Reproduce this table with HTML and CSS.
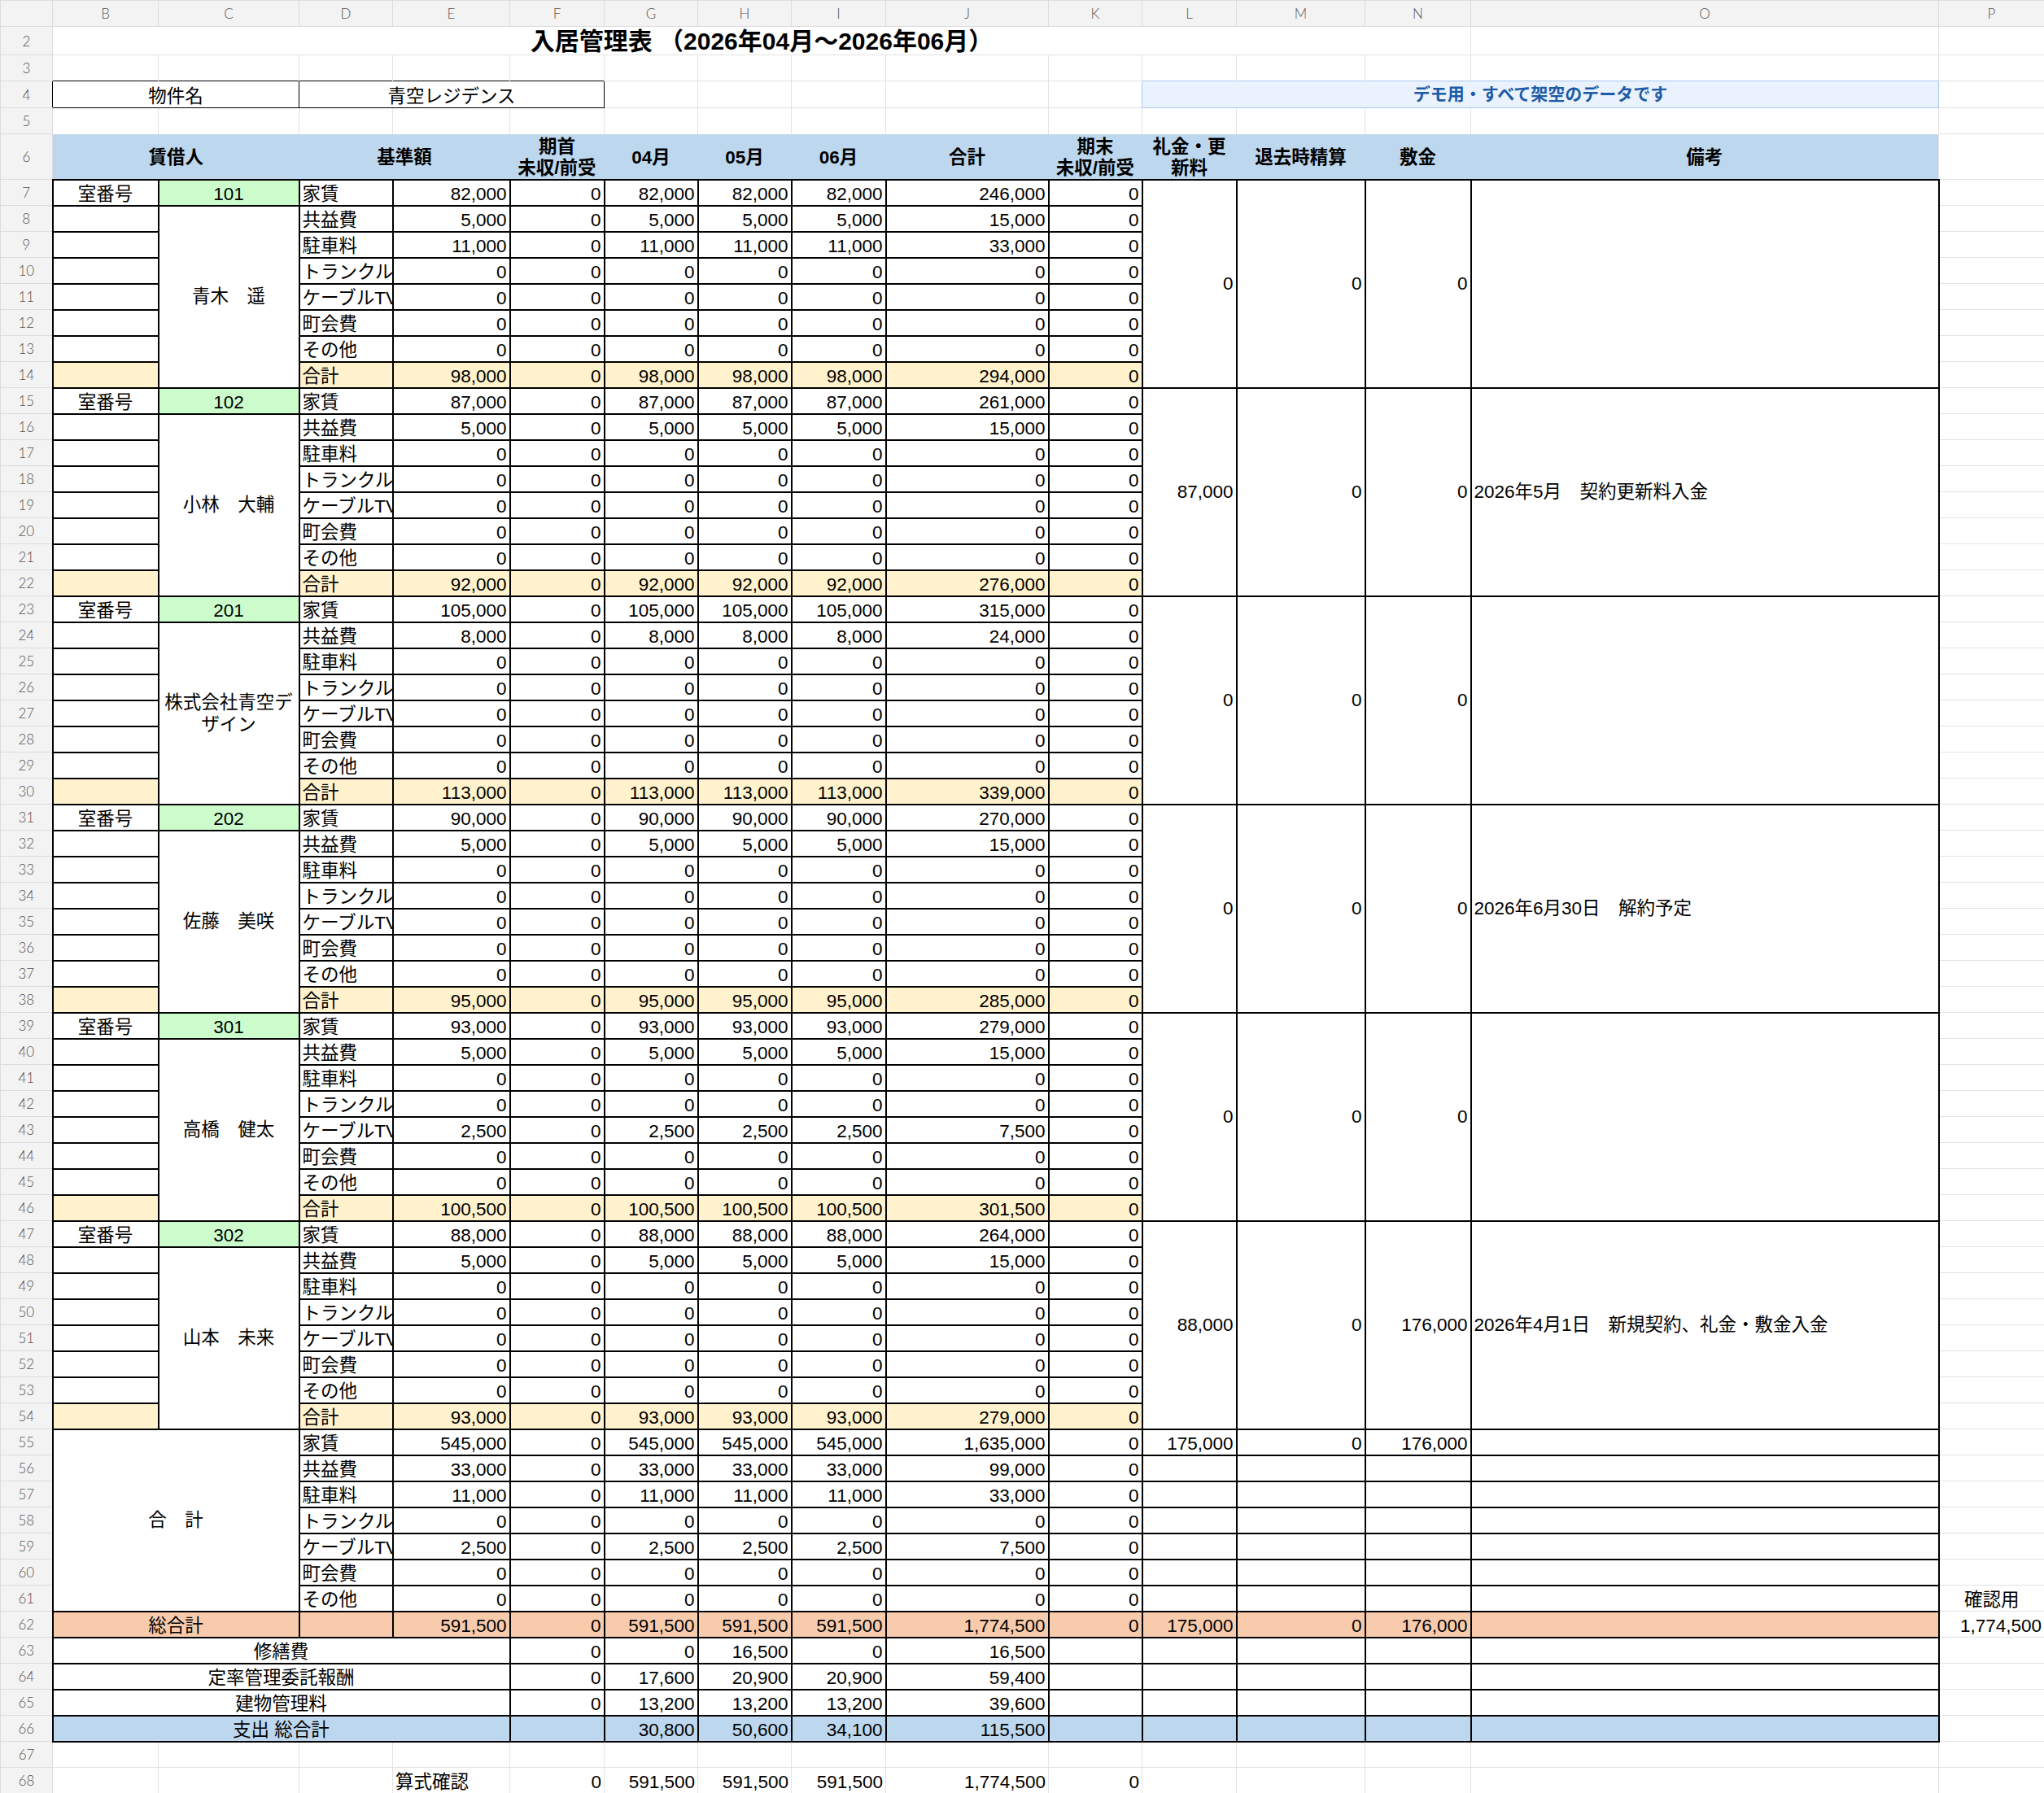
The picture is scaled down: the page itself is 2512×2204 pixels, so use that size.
FILE: index.html
```html
<!DOCTYPE html>
<html lang="ja">
<head>
<meta charset="utf-8">
<title>入居管理表</title>
<link rel="stylesheet" href="styles.css">
</head>
<body>
<table class="sheet">
<colgroup>
<col class="w64"><col class="w130"><col class="w173"><col class="w115"><col class="w144"><col class="w116"><col class="w115"><col class="w115"><col class="w116"><col class="w200"><col class="w115"><col class="w116"><col class="w158"><col class="w130"><col class="w575"><col class="w130">
</colgroup>
<tr class="r1"><th class="corner"></th><th>B</th><th>C</th><th>D</th><th>E</th><th>F</th><th>G</th><th>H</th><th>I</th><th>J</th><th>K</th><th>L</th><th>M</th><th>N</th><th>O</th><th>P</th></tr>
<tr class="r2"><th class="rh">2</th><td class="e title" colspan="13">入居管理表 （2026年04月～2026年06月）</td><td class="e"></td><td class="e"></td></tr>
<tr><th class="rh">3</th><td class="e nb"></td><td class="e nb"></td><td class="e nb"></td><td class="e nb"></td><td class="e nb"></td><td class="e"></td><td class="e"></td><td class="e"></td><td class="e"></td><td class="e"></td><td class="e nb"></td><td class="e nb"></td><td class="e nb"></td><td class="e nb"></td><td class="e"></td></tr>
<tr class="r4"><th class="rh nr">4</th><td class="box" colspan="2">物件名</td><td class="box" colspan="3">青空レジデンス</td><td class="e"></td><td class="e"></td><td class="e"></td><td class="e"></td><td class="e nr"></td><td class="banner" colspan="4">デモ用・すべて架空のデータです</td><td class="e"></td></tr>
<tr><th class="rh">5</th><td class="e nb"></td><td class="e nb"></td><td class="e nb"></td><td class="e nb"></td><td class="e nb"></td><td class="e nb"></td><td class="e nb"></td><td class="e nb"></td><td class="e nb"></td><td class="e nb"></td><td class="e nb"></td><td class="e nb"></td><td class="e nb"></td><td class="e nb"></td><td class="e"></td></tr>
<tr class="r6"><th class="rh">6</th><td class="hd" colspan="2">賃借人</td><td class="hd" colspan="2">基準額</td><td class="hd">期首<br>未収/前受</td><td class="hd">04月</td><td class="hd">05月</td><td class="hd">06月</td><td class="hd">合計</td><td class="hd">期末<br>未収/前受</td><td class="hd">礼金・更新料</td><td class="hd">退去時精算</td><td class="hd">敷金</td><td class="hd">備考</td><td class="e"></td></tr>

<tr><th class="rh">7</th><td class="c">室番号</td><td class="c g">101</td><td class="l">家賃</td><td>82,000</td><td>0</td><td>82,000</td><td>82,000</td><td>82,000</td><td>246,000</td><td>0</td><td class="m" rowspan="8">0</td><td class="m" rowspan="8">0</td><td class="m" rowspan="8">0</td><td class="m l" rowspan="8"></td><td class="e"></td></tr>
<tr><th class="rh">8</th><td></td><td class="nm" rowspan="7">青木　遥</td><td class="l">共益費</td><td>5,000</td><td>0</td><td>5,000</td><td>5,000</td><td>5,000</td><td>15,000</td><td>0</td><td class="e"></td></tr>
<tr><th class="rh">9</th><td></td><td class="l">駐車料</td><td>11,000</td><td>0</td><td>11,000</td><td>11,000</td><td>11,000</td><td>33,000</td><td>0</td><td class="e"></td></tr>
<tr><th class="rh">10</th><td></td><td class="l">トランクルーム</td><td>0</td><td>0</td><td>0</td><td>0</td><td>0</td><td>0</td><td>0</td><td class="e"></td></tr>
<tr><th class="rh">11</th><td></td><td class="l">ケーブルTV</td><td>0</td><td>0</td><td>0</td><td>0</td><td>0</td><td>0</td><td>0</td><td class="e"></td></tr>
<tr><th class="rh">12</th><td></td><td class="l">町会費</td><td>0</td><td>0</td><td>0</td><td>0</td><td>0</td><td>0</td><td>0</td><td class="e"></td></tr>
<tr><th class="rh">13</th><td></td><td class="l">その他</td><td>0</td><td>0</td><td>0</td><td>0</td><td>0</td><td>0</td><td>0</td><td class="e"></td></tr>
<tr><th class="rh">14</th><td class="y"></td><td class="l y">合計</td><td class="y">98,000</td><td class="y">0</td><td class="y">98,000</td><td class="y">98,000</td><td class="y">98,000</td><td class="y">294,000</td><td class="y">0</td><td class="e"></td></tr>

<tr><th class="rh">15</th><td class="c">室番号</td><td class="c g">102</td><td class="l">家賃</td><td>87,000</td><td>0</td><td>87,000</td><td>87,000</td><td>87,000</td><td>261,000</td><td>0</td><td class="m" rowspan="8">87,000</td><td class="m" rowspan="8">0</td><td class="m" rowspan="8">0</td><td class="m l" rowspan="8">2026年5月　契約更新料入金</td><td class="e"></td></tr>
<tr><th class="rh">16</th><td></td><td class="nm" rowspan="7">小林　大輔</td><td class="l">共益費</td><td>5,000</td><td>0</td><td>5,000</td><td>5,000</td><td>5,000</td><td>15,000</td><td>0</td><td class="e"></td></tr>
<tr><th class="rh">17</th><td></td><td class="l">駐車料</td><td>0</td><td>0</td><td>0</td><td>0</td><td>0</td><td>0</td><td>0</td><td class="e"></td></tr>
<tr><th class="rh">18</th><td></td><td class="l">トランクルーム</td><td>0</td><td>0</td><td>0</td><td>0</td><td>0</td><td>0</td><td>0</td><td class="e"></td></tr>
<tr><th class="rh">19</th><td></td><td class="l">ケーブルTV</td><td>0</td><td>0</td><td>0</td><td>0</td><td>0</td><td>0</td><td>0</td><td class="e"></td></tr>
<tr><th class="rh">20</th><td></td><td class="l">町会費</td><td>0</td><td>0</td><td>0</td><td>0</td><td>0</td><td>0</td><td>0</td><td class="e"></td></tr>
<tr><th class="rh">21</th><td></td><td class="l">その他</td><td>0</td><td>0</td><td>0</td><td>0</td><td>0</td><td>0</td><td>0</td><td class="e"></td></tr>
<tr><th class="rh">22</th><td class="y"></td><td class="l y">合計</td><td class="y">92,000</td><td class="y">0</td><td class="y">92,000</td><td class="y">92,000</td><td class="y">92,000</td><td class="y">276,000</td><td class="y">0</td><td class="e"></td></tr>

<tr><th class="rh">23</th><td class="c">室番号</td><td class="c g">201</td><td class="l">家賃</td><td>105,000</td><td>0</td><td>105,000</td><td>105,000</td><td>105,000</td><td>315,000</td><td>0</td><td class="m" rowspan="8">0</td><td class="m" rowspan="8">0</td><td class="m" rowspan="8">0</td><td class="m l" rowspan="8"></td><td class="e"></td></tr>
<tr><th class="rh">24</th><td></td><td class="nm" rowspan="7">株式会社青空デザイン</td><td class="l">共益費</td><td>8,000</td><td>0</td><td>8,000</td><td>8,000</td><td>8,000</td><td>24,000</td><td>0</td><td class="e"></td></tr>
<tr><th class="rh">25</th><td></td><td class="l">駐車料</td><td>0</td><td>0</td><td>0</td><td>0</td><td>0</td><td>0</td><td>0</td><td class="e"></td></tr>
<tr><th class="rh">26</th><td></td><td class="l">トランクルーム</td><td>0</td><td>0</td><td>0</td><td>0</td><td>0</td><td>0</td><td>0</td><td class="e"></td></tr>
<tr><th class="rh">27</th><td></td><td class="l">ケーブルTV</td><td>0</td><td>0</td><td>0</td><td>0</td><td>0</td><td>0</td><td>0</td><td class="e"></td></tr>
<tr><th class="rh">28</th><td></td><td class="l">町会費</td><td>0</td><td>0</td><td>0</td><td>0</td><td>0</td><td>0</td><td>0</td><td class="e"></td></tr>
<tr><th class="rh">29</th><td></td><td class="l">その他</td><td>0</td><td>0</td><td>0</td><td>0</td><td>0</td><td>0</td><td>0</td><td class="e"></td></tr>
<tr><th class="rh">30</th><td class="y"></td><td class="l y">合計</td><td class="y">113,000</td><td class="y">0</td><td class="y">113,000</td><td class="y">113,000</td><td class="y">113,000</td><td class="y">339,000</td><td class="y">0</td><td class="e"></td></tr>

<tr><th class="rh">31</th><td class="c">室番号</td><td class="c g">202</td><td class="l">家賃</td><td>90,000</td><td>0</td><td>90,000</td><td>90,000</td><td>90,000</td><td>270,000</td><td>0</td><td class="m" rowspan="8">0</td><td class="m" rowspan="8">0</td><td class="m" rowspan="8">0</td><td class="m l" rowspan="8">2026年6月30日　解約予定</td><td class="e"></td></tr>
<tr><th class="rh">32</th><td></td><td class="nm" rowspan="7">佐藤　美咲</td><td class="l">共益費</td><td>5,000</td><td>0</td><td>5,000</td><td>5,000</td><td>5,000</td><td>15,000</td><td>0</td><td class="e"></td></tr>
<tr><th class="rh">33</th><td></td><td class="l">駐車料</td><td>0</td><td>0</td><td>0</td><td>0</td><td>0</td><td>0</td><td>0</td><td class="e"></td></tr>
<tr><th class="rh">34</th><td></td><td class="l">トランクルーム</td><td>0</td><td>0</td><td>0</td><td>0</td><td>0</td><td>0</td><td>0</td><td class="e"></td></tr>
<tr><th class="rh">35</th><td></td><td class="l">ケーブルTV</td><td>0</td><td>0</td><td>0</td><td>0</td><td>0</td><td>0</td><td>0</td><td class="e"></td></tr>
<tr><th class="rh">36</th><td></td><td class="l">町会費</td><td>0</td><td>0</td><td>0</td><td>0</td><td>0</td><td>0</td><td>0</td><td class="e"></td></tr>
<tr><th class="rh">37</th><td></td><td class="l">その他</td><td>0</td><td>0</td><td>0</td><td>0</td><td>0</td><td>0</td><td>0</td><td class="e"></td></tr>
<tr><th class="rh">38</th><td class="y"></td><td class="l y">合計</td><td class="y">95,000</td><td class="y">0</td><td class="y">95,000</td><td class="y">95,000</td><td class="y">95,000</td><td class="y">285,000</td><td class="y">0</td><td class="e"></td></tr>

<tr><th class="rh">39</th><td class="c">室番号</td><td class="c g">301</td><td class="l">家賃</td><td>93,000</td><td>0</td><td>93,000</td><td>93,000</td><td>93,000</td><td>279,000</td><td>0</td><td class="m" rowspan="8">0</td><td class="m" rowspan="8">0</td><td class="m" rowspan="8">0</td><td class="m l" rowspan="8"></td><td class="e"></td></tr>
<tr><th class="rh">40</th><td></td><td class="nm" rowspan="7">高橋　健太</td><td class="l">共益費</td><td>5,000</td><td>0</td><td>5,000</td><td>5,000</td><td>5,000</td><td>15,000</td><td>0</td><td class="e"></td></tr>
<tr><th class="rh">41</th><td></td><td class="l">駐車料</td><td>0</td><td>0</td><td>0</td><td>0</td><td>0</td><td>0</td><td>0</td><td class="e"></td></tr>
<tr><th class="rh">42</th><td></td><td class="l">トランクルーム</td><td>0</td><td>0</td><td>0</td><td>0</td><td>0</td><td>0</td><td>0</td><td class="e"></td></tr>
<tr><th class="rh">43</th><td></td><td class="l">ケーブルTV</td><td>2,500</td><td>0</td><td>2,500</td><td>2,500</td><td>2,500</td><td>7,500</td><td>0</td><td class="e"></td></tr>
<tr><th class="rh">44</th><td></td><td class="l">町会費</td><td>0</td><td>0</td><td>0</td><td>0</td><td>0</td><td>0</td><td>0</td><td class="e"></td></tr>
<tr><th class="rh">45</th><td></td><td class="l">その他</td><td>0</td><td>0</td><td>0</td><td>0</td><td>0</td><td>0</td><td>0</td><td class="e"></td></tr>
<tr><th class="rh">46</th><td class="y"></td><td class="l y">合計</td><td class="y">100,500</td><td class="y">0</td><td class="y">100,500</td><td class="y">100,500</td><td class="y">100,500</td><td class="y">301,500</td><td class="y">0</td><td class="e"></td></tr>

<tr><th class="rh">47</th><td class="c">室番号</td><td class="c g">302</td><td class="l">家賃</td><td>88,000</td><td>0</td><td>88,000</td><td>88,000</td><td>88,000</td><td>264,000</td><td>0</td><td class="m" rowspan="8">88,000</td><td class="m" rowspan="8">0</td><td class="m" rowspan="8">176,000</td><td class="m l" rowspan="8">2026年4月1日　新規契約、礼金・敷金入金</td><td class="e"></td></tr>
<tr><th class="rh">48</th><td></td><td class="nm" rowspan="7">山本　未来</td><td class="l">共益費</td><td>5,000</td><td>0</td><td>5,000</td><td>5,000</td><td>5,000</td><td>15,000</td><td>0</td><td class="e"></td></tr>
<tr><th class="rh">49</th><td></td><td class="l">駐車料</td><td>0</td><td>0</td><td>0</td><td>0</td><td>0</td><td>0</td><td>0</td><td class="e"></td></tr>
<tr><th class="rh">50</th><td></td><td class="l">トランクルーム</td><td>0</td><td>0</td><td>0</td><td>0</td><td>0</td><td>0</td><td>0</td><td class="e"></td></tr>
<tr><th class="rh">51</th><td></td><td class="l">ケーブルTV</td><td>0</td><td>0</td><td>0</td><td>0</td><td>0</td><td>0</td><td>0</td><td class="e"></td></tr>
<tr><th class="rh">52</th><td></td><td class="l">町会費</td><td>0</td><td>0</td><td>0</td><td>0</td><td>0</td><td>0</td><td>0</td><td class="e"></td></tr>
<tr><th class="rh">53</th><td></td><td class="l">その他</td><td>0</td><td>0</td><td>0</td><td>0</td><td>0</td><td>0</td><td>0</td><td class="e"></td></tr>
<tr><th class="rh">54</th><td class="y"></td><td class="l y">合計</td><td class="y">93,000</td><td class="y">0</td><td class="y">93,000</td><td class="y">93,000</td><td class="y">93,000</td><td class="y">279,000</td><td class="y">0</td><td class="e"></td></tr>

<tr><th class="rh">55</th><td class="nm" colspan="2" rowspan="7">合　計</td><td class="l">家賃</td><td>545,000</td><td>0</td><td>545,000</td><td>545,000</td><td>545,000</td><td>1,635,000</td><td>0</td><td>175,000</td><td>0</td><td>176,000</td><td></td><td class="e"></td></tr>
<tr><th class="rh">56</th><td class="l">共益費</td><td>33,000</td><td>0</td><td>33,000</td><td>33,000</td><td>33,000</td><td>99,000</td><td>0</td><td></td><td></td><td></td><td></td><td class="e"></td></tr>
<tr><th class="rh">57</th><td class="l">駐車料</td><td>11,000</td><td>0</td><td>11,000</td><td>11,000</td><td>11,000</td><td>33,000</td><td>0</td><td></td><td></td><td></td><td></td><td class="e"></td></tr>
<tr><th class="rh">58</th><td class="l">トランクルーム</td><td>0</td><td>0</td><td>0</td><td>0</td><td>0</td><td>0</td><td>0</td><td></td><td></td><td></td><td></td><td class="e"></td></tr>
<tr><th class="rh">59</th><td class="l">ケーブルTV</td><td>2,500</td><td>0</td><td>2,500</td><td>2,500</td><td>2,500</td><td>7,500</td><td>0</td><td></td><td></td><td></td><td></td><td class="e"></td></tr>
<tr><th class="rh">60</th><td class="l">町会費</td><td>0</td><td>0</td><td>0</td><td>0</td><td>0</td><td>0</td><td>0</td><td></td><td></td><td></td><td></td><td class="e"></td></tr>
<tr><th class="rh">61</th><td class="l">その他</td><td>0</td><td>0</td><td>0</td><td>0</td><td>0</td><td>0</td><td>0</td><td></td><td></td><td></td><td></td><td class="e c">確認用</td></tr>
<tr><th class="rh">62</th><td class="c pk" colspan="2">総合計</td><td class="pk"></td><td class="pk">591,500</td><td class="pk">0</td><td class="pk">591,500</td><td class="pk">591,500</td><td class="pk">591,500</td><td class="pk">1,774,500</td><td class="pk">0</td><td class="pk">175,000</td><td class="pk">0</td><td class="pk">176,000</td><td class="pk"></td><td class="e">1,774,500</td></tr>
<tr><th class="rh">63</th><td class="c" colspan="4">修繕費</td><td>0</td><td>0</td><td>16,500</td><td>0</td><td>16,500</td><td></td><td></td><td></td><td></td><td></td><td class="e"></td></tr>
<tr><th class="rh">64</th><td class="c" colspan="4">定率管理委託報酬</td><td>0</td><td>17,600</td><td>20,900</td><td>20,900</td><td>59,400</td><td></td><td></td><td></td><td></td><td></td><td class="e"></td></tr>
<tr><th class="rh">65</th><td class="c" colspan="4">建物管理料</td><td>0</td><td>13,200</td><td>13,200</td><td>13,200</td><td>39,600</td><td></td><td></td><td></td><td></td><td></td><td class="e"></td></tr>
<tr><th class="rh">66</th><td class="c bl" colspan="4">支出 総合計</td><td class="bl"></td><td class="bl">30,800</td><td class="bl">50,600</td><td class="bl">34,100</td><td class="bl">115,500</td><td class="bl"></td><td class="bl"></td><td class="bl"></td><td class="bl"></td><td class="bl"></td><td class="e"></td></tr>
<tr><th class="rh">67</th><td class="e"></td><td class="e"></td><td class="e"></td><td class="e"></td><td class="e"></td><td class="e"></td><td class="e"></td><td class="e"></td><td class="e"></td><td class="e"></td><td class="e"></td><td class="e"></td><td class="e"></td><td class="e"></td><td class="e"></td></tr>
<tr><th class="rh">68</th><td class="e"></td><td class="e"></td><td class="e"></td><td class="e l">算式確認</td><td class="e">0</td><td class="e">591,500</td><td class="e">591,500</td><td class="e">591,500</td><td class="e">1,774,500</td><td class="e">0</td><td class="e"></td><td class="e"></td><td class="e"></td><td class="e"></td><td class="e"></td></tr>
</table>
</body>
</html>
```

FILE: styles.css
```css
html, body {
  margin: 0;
  padding: 0;
  background: #ffffff;
}

body {
  font-family: "Liberation Sans", "Noto Sans CJK JP", sans-serif;
  color: #000000;
}

.sheet {
  border-collapse: collapse;
  table-layout: fixed;
  width: 2512px;
  font-size: 22.5px;
}

.w64 { width: 64px; }
.w115 { width: 115px; }
.w116 { width: 116px; }
.w130 { width: 130px; }
.w144 { width: 144px; }
.w158 { width: 158px; }
.w173 { width: 173px; }
.w200 { width: 200px; }
.w575 { width: 575px; }

.sheet tr { height: 32px; }
.sheet tr.r2 { height: 35px; }
.sheet tr.r4 { height: 33px; }
.sheet tr.r6 { height: 56px; }

.sheet th {
  font-family: Lato, "Noto Sans", sans-serif;
  font-weight: 300;
  font-size: 17px;
  color: #555555;
  background: #f3f3f3;
  border: 1px solid #dcdcdc;
  text-align: center;
  vertical-align: middle;
  padding: 0;
}

.sheet th.nr { border-right-style: none; }

.sheet td {
  border: 2px solid #000000;
  padding: 0 3px;
  white-space: nowrap;
  overflow: hidden;
  text-align: right;
  vertical-align: bottom;
  line-height: 26px;
}

.sheet td.e { border: 1px solid #e3e3e3; }
.sheet td.nb { border-bottom-style: none; }
.sheet td.nr { border-right-style: none; }

.sheet td.l { text-align: left; }
.sheet td.c { text-align: center; }
.sheet td.m { vertical-align: middle; }

.sheet td.nm {
  text-align: center;
  vertical-align: middle;
  white-space: normal;
  line-height: 27px;
}

.sheet td.g { background: #ccfccc; }
.sheet td.y { background: #fff2cc; }
.sheet td.pk { background: #f8cbad; }
.sheet td.bl { background: #bdd7ee; }

.sheet td.title {
  font-size: 30px;
  font-weight: 700;
  text-align: center;
  vertical-align: middle;
  line-height: 33px;
}

.sheet td.box {
  border: 1px solid #000000;
  text-align: center;
}

.sheet td.banner {
  border: 1px solid #a9c8f0;
  background: #e9f2fd;
  color: #1e5aa6;
  font-weight: 700;
  font-size: 21px;
  text-align: center;
  vertical-align: middle;
}

.sheet td.hd {
  border-style: none;
  background: #bdd7ee;
  font-weight: 700;
  text-align: center;
  vertical-align: middle;
  white-space: normal;
  line-height: 26px;
  padding: 3px 2px 0;
}
```
